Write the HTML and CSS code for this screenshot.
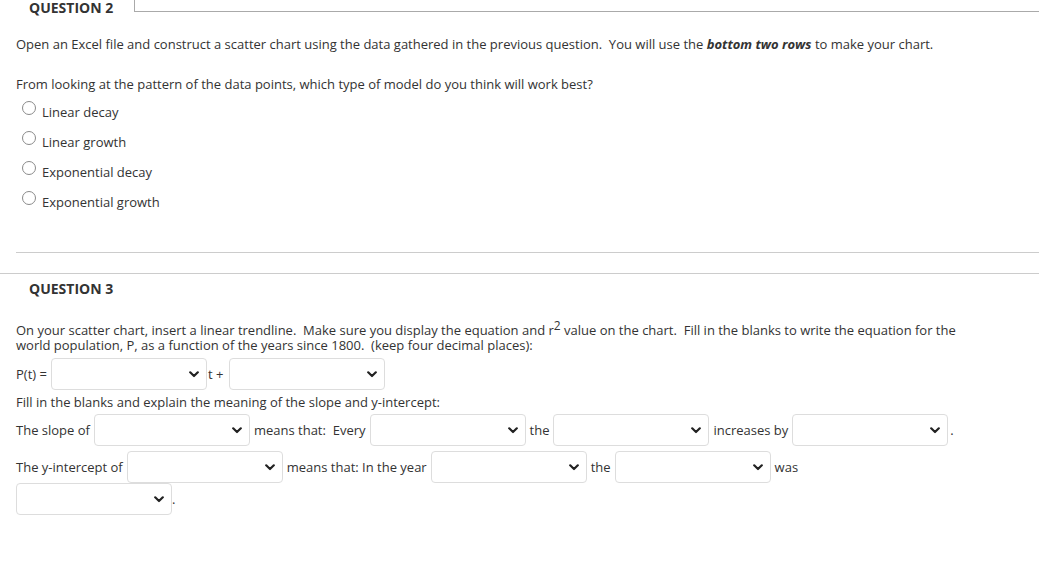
FILE: index.html
```html
<!DOCTYPE html>
<html>
<head>
<meta charset="utf-8">
<link rel="stylesheet" href="styles.css">
</head>
<body>
<section class="q q2">
  <div class="q-head">
    <h2 class="q-title">QUESTION 2</h2>
    <div class="q-frame"></div>
  </div>
  <p class="p1">Open an Excel file and construct a scatter chart using the data gathered in the previous question.&nbsp; You will use the <b><i>bottom two rows</i></b> to make your chart.</p>
  <p class="p2">From looking at the pattern of the data points, which type of model do you think will work best?</p>
  <ul class="radios">
    <li class="radio-row"><span class="radio"></span><span>Linear decay</span></li>
    <li class="radio-row"><span class="radio"></span><span>Linear growth</span></li>
    <li class="radio-row"><span class="radio"></span><span>Exponential decay</span></li>
    <li class="radio-row"><span class="radio"></span><span>Exponential growth</span></li>
  </ul>
  <div class="sep-inner"></div>
</section>
<section class="q q3">
  <h2 class="q-title q3-title">QUESTION 3</h2>
  <p class="p3">On your scatter chart, insert a linear trendline.&nbsp; Make sure you display the equation and r<sup>2</sup> value on the chart.&nbsp; Fill in the blanks to write the equation for the world population, P, as a function of the years since 1800.&nbsp; (keep four decimal places):</p>
  <div class="row row-pt">
    <span>P(t) =</span>
    <span class="sel"><svg class="chev" viewBox="0 0 10 7"><path d="M1.2 1.3 L5 5 L8.8 1.3" /></svg></span>
    <span class="t-plus">t +</span>
    <span class="sel"><svg class="chev" viewBox="0 0 10 7"><path d="M1.2 1.3 L5 5 L8.8 1.3" /></svg></span>
  </div>
  <p class="p4">Fill in the blanks and explain the meaning of the slope and y-intercept:</p>
  <div class="row row-slope">
    <span>The slope of</span>
    <span class="sel"><svg class="chev" viewBox="0 0 10 7"><path d="M1.2 1.3 L5 5 L8.8 1.3" /></svg></span>
    <span>means that:&nbsp; Every</span>
    <span class="sel"><svg class="chev" viewBox="0 0 10 7"><path d="M1.2 1.3 L5 5 L8.8 1.3" /></svg></span>
    <span>the</span>
    <span class="sel"><svg class="chev" viewBox="0 0 10 7"><path d="M1.2 1.3 L5 5 L8.8 1.3" /></svg></span>
    <span>increases by</span>
    <span class="sel"><svg class="chev" viewBox="0 0 10 7"><path d="M1.2 1.3 L5 5 L8.8 1.3" /></svg></span>
    <span class="dot">.</span>
  </div>
  <div class="row row-int">
    <span>The y-intercept of</span>
    <span class="sel"><svg class="chev" viewBox="0 0 10 7"><path d="M1.2 1.3 L5 5 L8.8 1.3" /></svg></span>
    <span>means that: In the year</span>
    <span class="sel"><svg class="chev" viewBox="0 0 10 7"><path d="M1.2 1.3 L5 5 L8.8 1.3" /></svg></span>
    <span>the</span>
    <span class="sel"><svg class="chev" viewBox="0 0 10 7"><path d="M1.2 1.3 L5 5 L8.8 1.3" /></svg></span>
    <span>was</span>
  </div>
  <div class="row row-int2">
    <span class="sel"><svg class="chev" viewBox="0 0 10 7"><path d="M1.2 1.3 L5 5 L8.8 1.3" /></svg></span>
    <span class="dot">.</span>
  </div>
</section>
</body>
</html>
```
FILE: styles.css
```css
* { box-sizing: border-box; }
html, body { margin: 0; padding: 0; background: #fff; }
body {
  font-family: "Open Sans", "DejaVu Sans", sans-serif;
  font-size: 13px;
  color: #333;
  line-height: 18px;
  width: 1039px;
  height: 567px;
  overflow: hidden;
}
p { margin: 0; }
.q2 { padding-left: 16px; }
.q-head { display: flex; align-items: flex-start; height: 16px; margin-left: -16px; }
.q-title {
  margin: 0;
  font-size: 14px;
  font-weight: 700;
  line-height: 16px;
  color: #333;
  padding-left: 29px;
}
.q-frame {
  flex: 1;
  height: 12px;
  margin-left: 21px;
  border-left: 1px solid #aaa;
  border-bottom: 1px solid #aaa;
}
.p1 { margin-top: 19px; }
.p2 { margin-top: 22px; }
.radios { list-style: none; margin: 4px 0 0; padding: 0; }
.radio-row {
  display: flex;
  align-items: flex-start;
  height: 30px;
  padding-top: 6px;
}
.radio {
  width: 14px;
  height: 14px;
  border: 1px solid #8a8a8a;
  border-radius: 50%;
  margin: -2px 6px 0 6px;
  flex: none;
}
.sep-inner { margin-top: 35px; border-top: 1px solid #ccc; }
.q3 { border-top: 1px solid #ccc; margin-top: 20px; padding-left: 16px; }
.q3-title { padding-left: 13px; margin-top: 7px; }
.p3 { margin-top: 26px; line-height: 15px; width: 960px; }
.p3 sup { font-size: 12px; line-height: 0; vertical-align: 5px; }
.row { display: flex; align-items: center; gap: 4px; }
.row-pt { margin-top: 5px; }
.row-pt .t-plus { margin-left: -3px; margin-right: 2px; }
.p4 { margin-top: 3px; }
.row-slope { margin-top: 3px; }
.row-int { margin-top: 5px; }
.row-int2 { margin-top: 0; gap: 2px; }
.sel {
  display: flex;
  align-items: center;
  justify-content: flex-end;
  width: 156px;
  height: 32px;
  border: 1px solid #ddd;
  border-radius: 4px;
  padding-right: 7px;
  background: #fff;
}
.chev { width: 10px; height: 7px; }
.chev path { fill: none; stroke: #222; stroke-width: 2.2; stroke-linecap: round; stroke-linejoin: round; }
.dot { margin-left: -2px; }
```
